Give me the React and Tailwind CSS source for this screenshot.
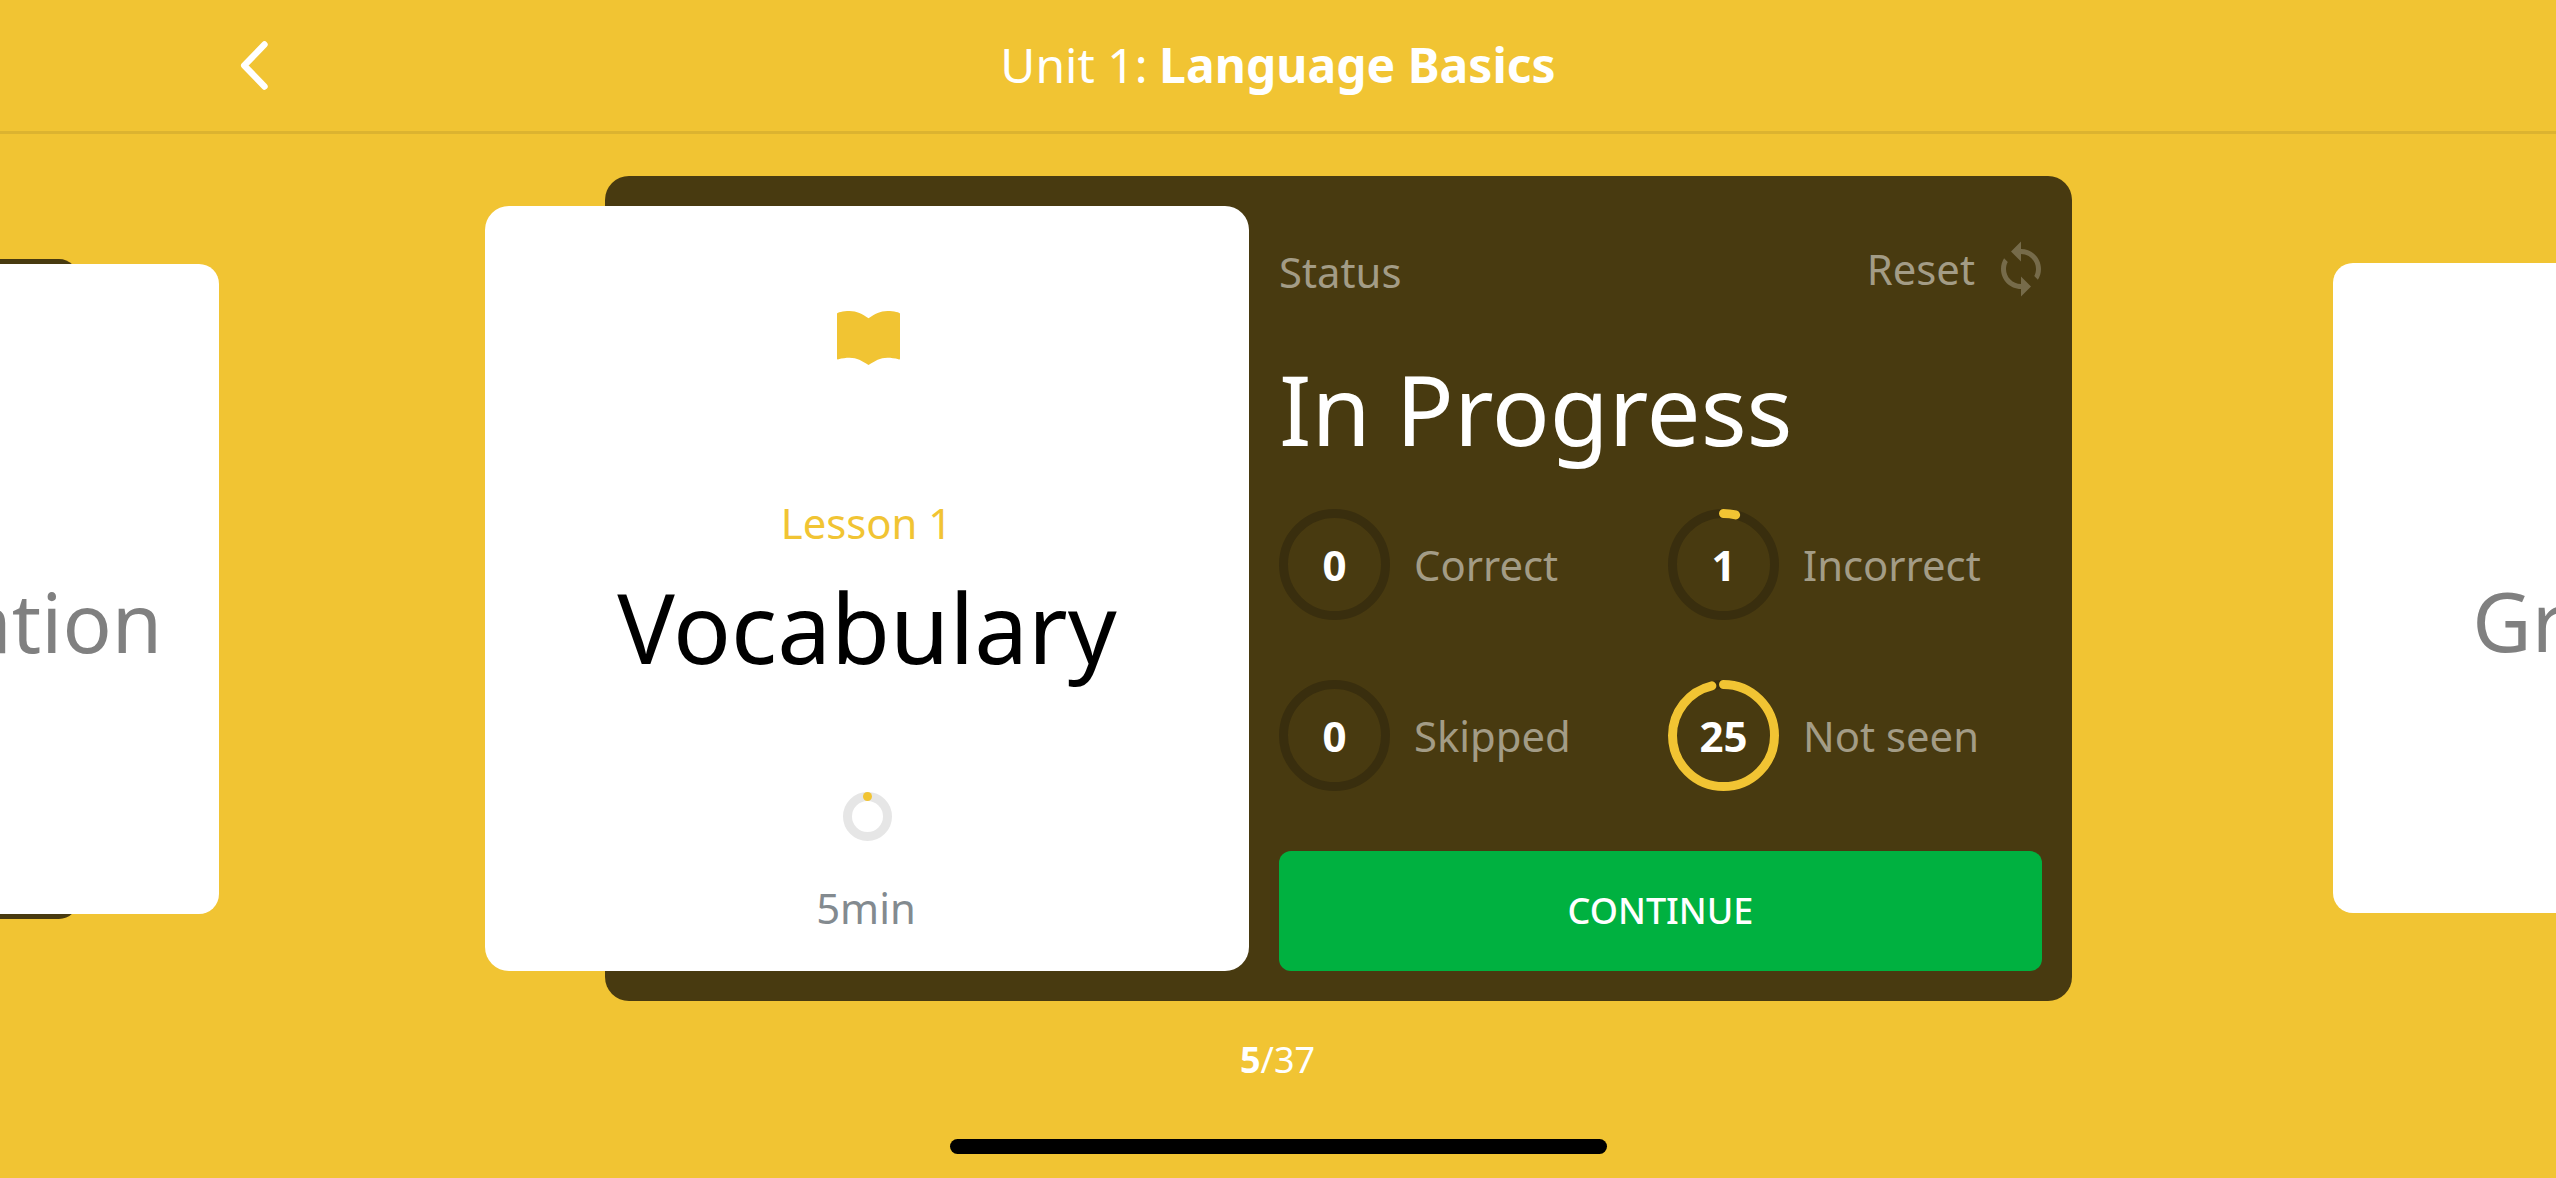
const RING_RADIUS = 51;
const RING_LENGTH = 2 * Math.PI * RING_RADIUS;
const TOTAL = 26;

const stats = [
  { label: "Correct", value: 0 },
  { label: "Incorrect", value: 1 },
  { label: "Skipped", value: 0 },
  { label: "Not seen", value: 25 },
];

function StatRing({ value }) {
  return (
    <div className="grid size-[111px] shrink-0 place-items-center">
      <svg viewBox="0 0 111 111" className="col-start-1 row-start-1 size-[111px] -rotate-90" fill="none" strokeWidth="9">
        <circle cx="55.5" cy="55.5" r={RING_RADIUS} stroke="#392e0e" />
        {value > 0 && (
          <circle
            cx="55.5"
            cy="55.5"
            r={RING_RADIUS}
            stroke="#f1c433"
            strokeLinecap="round"
            strokeDasharray={`${(value / TOTAL) * RING_LENGTH} ${RING_LENGTH}`}
          />
        )}
      </svg>
      <span className="col-start-1 row-start-1 text-[42px] leading-[56px] font-bold text-white">{value}</span>
    </div>
  );
}

function Header() {
  return (
    <header className="grid h-[134px] shrink-0 grid-cols-[1fr_auto_1fr] items-center border-b-[3px] border-[#dcb330] pb-[2px] text-white">
      <button aria-label="Back" className="ml-[240px] w-[30px]">
        <svg viewBox="0 0 30 50" className="h-[50px] w-[30px]" fill="none" stroke="currentColor" strokeWidth="6.4" strokeLinecap="round" strokeLinejoin="round">
          <path d="M24.5 4.5L4.2 25.5L24.5 46.5" />
        </svg>
      </button>
      <h1 className="text-[48px] leading-[64px] font-normal">
        Unit 1: <span className="-ml-px font-bold">Language Basics</span>
      </h1>
    </header>
  );
}

function LessonCard() {
  return (
    <article className="-ml-[150px] flex h-[765px] w-[764px] shrink-0 flex-col items-center rounded-[24px] bg-white pt-[105px]">
      <svg viewBox="0 0 63 54" className="ml-[3px] h-[54px] w-[63px]" fill="#f1c433">
        <path d="M0 2.6C0 1.6 6 0 12.5 0C20 0 25 3 31.5 7.2C38 3 43 0 50.5 0C57 0 63 1.6 63 2.6V47.6C63 48.6 62.3 48.6 61.5 48.3C58 47.3 54 46.8 50.5 46.8C43 46.8 38 50 31.5 54C25 50 20 46.8 12.5 46.8C9 46.8 5 47.3 1.5 48.3C0.7 48.6 0 48.6 0 47.6Z" />
      </svg>
      <p className="mt-[130px] mr-px text-[41.8px] leading-[56px] text-[#f1c433]">Lesson 1</p>
      <h2 className="mt-[11px] text-[96px] leading-[130px] text-black">Vocabulary</h2>
      <svg viewBox="0 0 49 49" className="mt-[100px] size-[49px]" fill="none">
        <circle cx="24.5" cy="24.5" r="20" stroke="#e6e6e6" strokeWidth="9" />
        <circle cx="24.5" cy="4.5" r="4.5" fill="#f1c433" />
      </svg>
      <p className="mt-[39px] mr-[2px] text-[41.8px] leading-[56px] text-[#838a8f]">5min</p>
    </article>
  );
}

function StatusPanel() {
  return (
    <section className="ml-[30px] flex flex-1 flex-col">
      <div className="flex h-[138px] items-start justify-between pt-[33px] text-[41.8px] leading-[56px] text-[#a39c86]">
        <span className="mt-[5px]">Status</span>
        <button className="-mr-[9px] flex items-start">
          <span className="mt-[2px]">Reset</span>
          <svg viewBox="0 0 24 24" className="ml-[16px] size-[60px]" fill="#766b4a">
            <path d="M12 4V1L8 5l4 4V6c3.31 0 6 2.69 6 6 0 1.01-.25 1.97-.7 2.8l1.46 1.46C19.54 15.03 20 13.57 20 12c0-4.42-3.58-8-8-8zm0 14c-3.31 0-6-2.69-6-6 0-1.01.25-1.97.7-2.8L5.24 7.74C4.46 8.97 4 10.43 4 12c0 4.42 3.58 8 8 8v3l4-4-4-4v3z" />
          </svg>
        </button>
      </div>
      <h2 className="text-[96px] leading-[130px] text-white">In Progress</h2>
      <div className="mt-[35px] grid grid-cols-[389px_1fr] gap-y-[60px]">
        {stats.map((s) => (
          <div key={s.label} className="flex items-center">
            <StatRing value={s.value} />
            <span className="ml-[24px] text-[41.8px] leading-[56px] whitespace-nowrap text-[#a39c86]">{s.label}</span>
          </div>
        ))}
      </div>
      <button className="mt-auto h-[120px] rounded-[12px] bg-[#00b140] text-[36px] font-medium text-white">CONTINUE</button>
    </section>
  );
}

function SideCard({ title }) {
  return (
    <article className="flex h-[650px] w-[650px] shrink-0 flex-col items-center rounded-[20px] bg-white pt-[302px]">
      <h2 className="mr-[2px] text-[81.6px] leading-[111px] text-[#808080]">{title}</h2>
    </article>
  );
}

export default function App() {
  return (
    <div className="flex h-[1178px] w-full flex-col overflow-hidden bg-[#f1c433] font-['Noto_Sans',sans-serif]">
      <Header />
      <main className="flex h-[909px] shrink-0 items-start overflow-hidden">
        <div className="relative mt-[125px] flex h-[660px] w-[219px] shrink-0 items-center justify-end">
          <div className="absolute inset-y-0 right-[141px] w-[1174px] rounded-[19px] bg-[#483a10]" />
          <div className="relative flex">
            <SideCard title="Pronunciation" />
          </div>
        </div>
        <div className="mt-[42px] ml-[386px] flex h-[825px] w-[1467px] shrink-0 rounded-[24px] bg-[#483a10] p-[30px]">
          <LessonCard />
          <StatusPanel />
        </div>
        <div className="mt-[129px] ml-[261px] flex flex-1 overflow-hidden">
          <SideCard title="Grammar" />
        </div>
      </main>
      <footer className="flex flex-1 flex-col items-center text-white">
        <p className="-mt-[8px] mr-px text-[36px] leading-[50px]">
          <span className="font-bold">5</span>/37
        </p>
        <div className="mt-auto mb-[24px] h-[15px] w-[657px] rounded-[7.5px] bg-black" />
      </footer>
    </div>
  );
}
